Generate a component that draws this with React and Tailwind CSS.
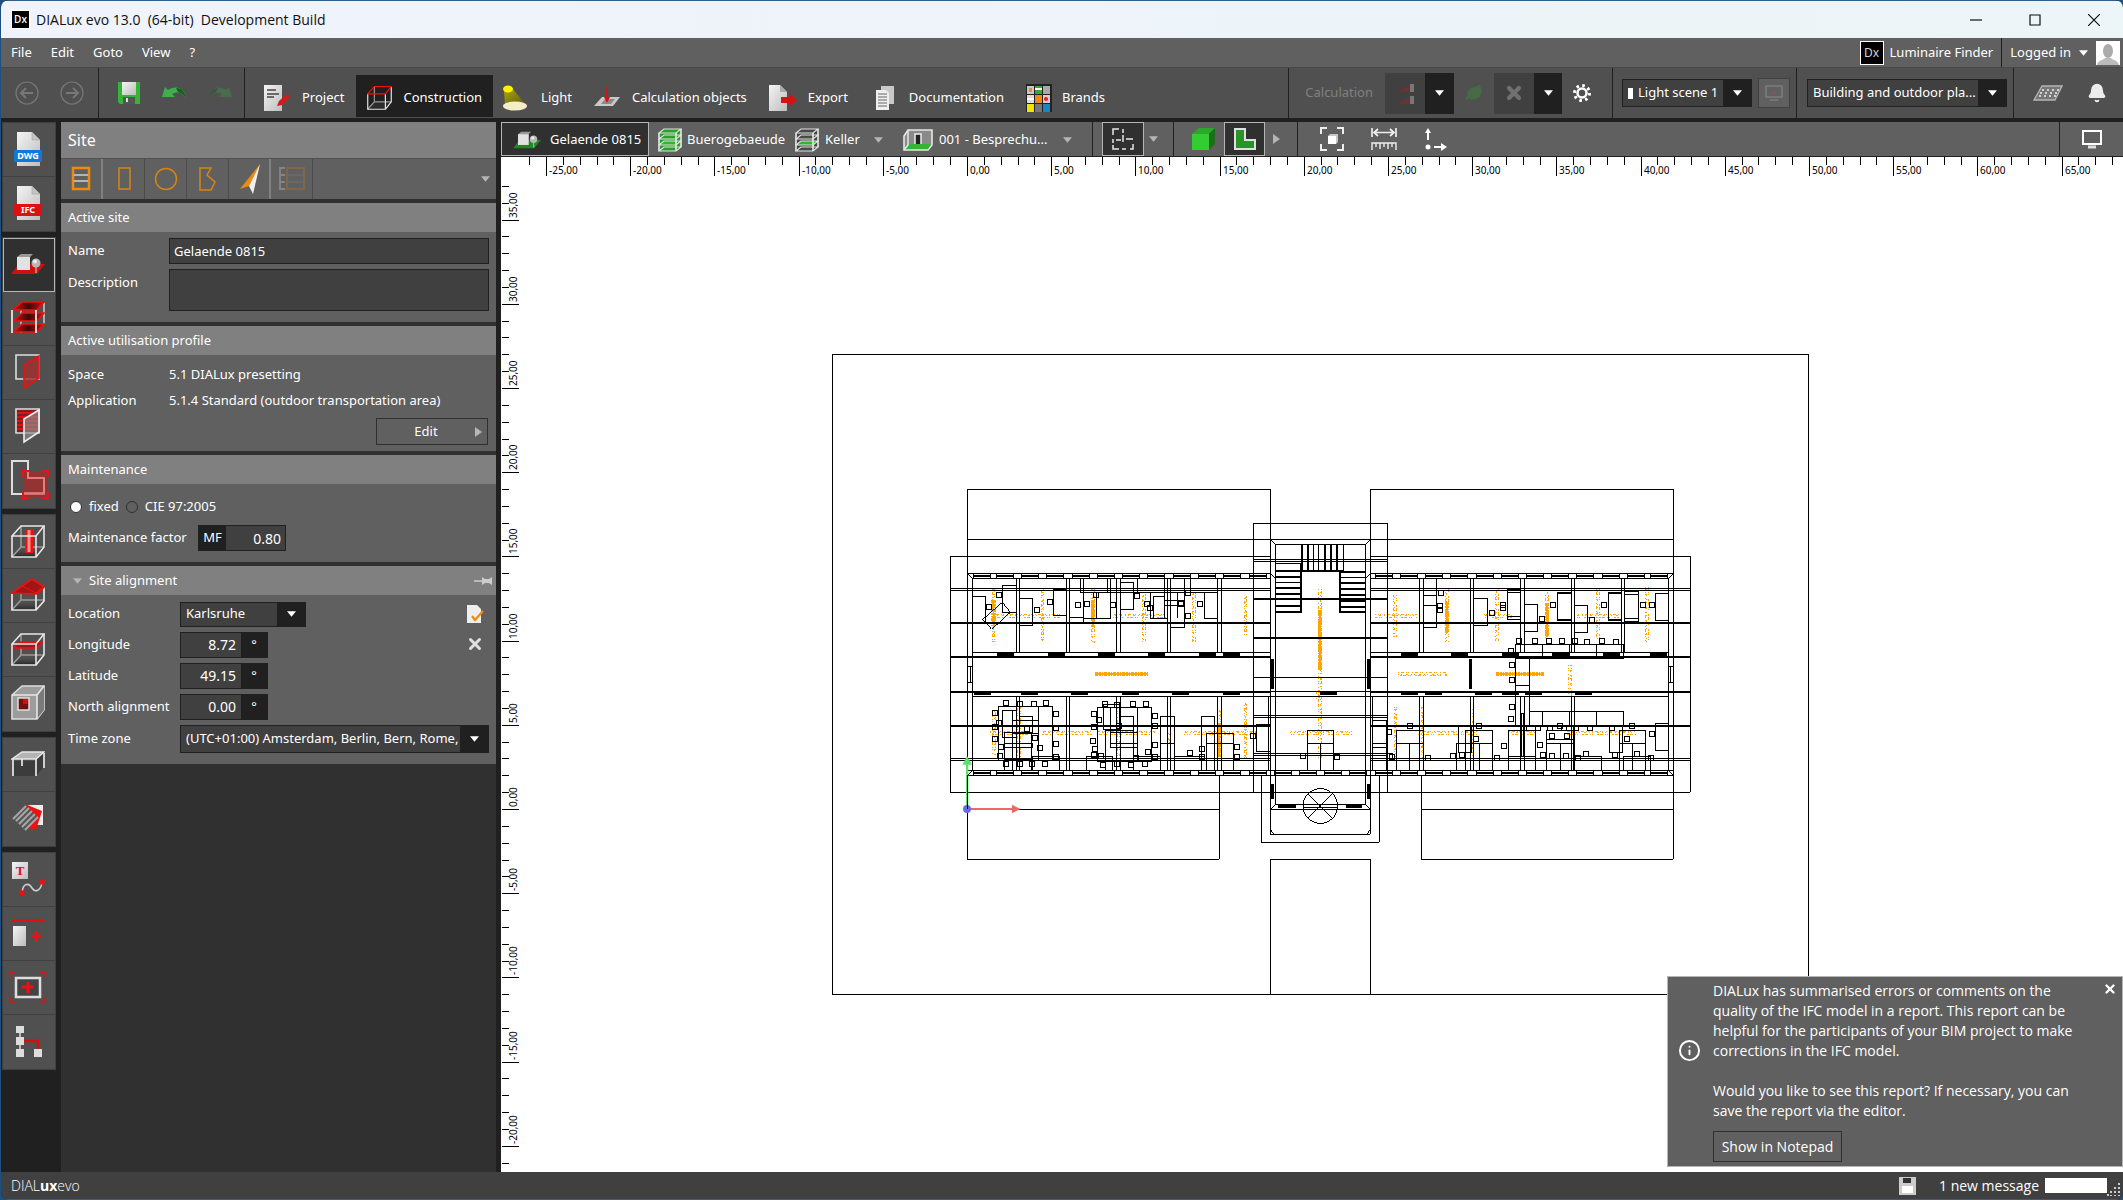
import React from 'react';
import { Leaf, Info, X, Bell } from 'lucide-react';
import clsx from 'clsx';

/* ---------- small building blocks ---------- */

const Caret = ({ className = 'text-white' }) => (
  <svg viewBox="0 0 10 6" className={clsx('w-[9px] h-[6px] shrink-0', className)} fill="currentColor">
    <path d="M0 0H10L5 6Z" />
  </svg>
);

const CaretRight = () => (
  <svg viewBox="0 0 7 10" className="w-[7px] h-[10px] shrink-0" fill="#b5b5b5">
    <path d="M0 0V10L7 5Z" />
  </svg>
);

const Divider = () => <div className="w-px self-stretch bg-[#202020] shrink-0" />;

const Dropdown = ({ id, label, options, className, arrow = 'w-7', children }) => (
  <div className={clsx('relative flex items-center bg-[#404040] border border-[#202020]', className)}>
    {children}
    <select
      id={id}
      aria-label={label}
      className="appearance-none outline-none bg-transparent text-white min-w-0 w-full h-full pl-[5px] pr-7"
    >
      {options.map((o) => (
        <option key={o}>{o}</option>
      ))}
    </select>
    <div className={clsx('absolute right-0 inset-y-0 bg-[#202020] flex items-center justify-center pointer-events-none', arrow)}>
      <Caret />
    </div>
  </div>
);

/* ---------- icons ---------- */

const Gradients = () => (
  <svg className="absolute w-0 h-0" aria-hidden="true">
    <defs>
      <linearGradient id="paper" x1="0" y1="0" x2="1" y2="1">
        <stop offset="0" stopColor="#f4f4f4" />
        <stop offset="1" stopColor="#bdbdbd" />
      </linearGradient>
      <linearGradient id="beam" x1="0" y1="0" x2="1" y2="1">
        <stop offset="0" stopColor="#b0a800" />
        <stop offset="1" stopColor="#5c5a20" />
      </linearGradient>
      <linearGradient id="redFade" x1="0" y1="0" x2="1" y2="0">
        <stop offset="0" stopColor="#e01010" />
        <stop offset="0.5" stopColor="#400808" />
        <stop offset="1" stopColor="#d01010" />
      </linearGradient>
      <linearGradient id="shade" x1="0" y1="0" x2="0" y2="1">
        <stop offset="0" stopColor="#555" stopOpacity="0" />
        <stop offset="1" stopColor="#222" />
      </linearGradient>
    </defs>
  </svg>
);

const Svg = ({ w, h, className, children }) => (
  <svg width={w} height={h} viewBox={`0 0 ${w} ${h}`} fill="none" className={clsx('shrink-0', className)}>
    {children}
  </svg>
);

const DxLogo = ({ outlined }) => (
  <span
    className={clsx(
      'bg-black flex items-center justify-center shrink-0 border border-white',
      outlined ? 'w-6 h-6 text-[12px] text-gray-300' : 'w-[19px] h-[19px] text-[10px] font-semibold text-white'
    )}
  >
    Dx
  </span>
);

const FileIcon = ({ name, color }) => (
  <Svg w={30} h={36}>
    <path d="M4 1H19L27 9V35H4Z" fill="url(#paper)" />
    <path d="M19 1V9H27Z" fill="#c4c4c4" stroke="#999" strokeWidth="0.5" />
    <rect x="1" y="19" width="28" height="12" fill={color} />
    <text x="15" y="28" textAnchor="middle" fontSize="9" fontWeight="700" fill="#fff">{name}</text>
  </Svg>
);

const SiteIcon = ({ ground, w = 36, h = 22 }) => (
  <svg width={w} height={h} viewBox="0 0 36 22" fill="none" className="shrink-0">
    <path d="M1 21L9 11H35L27 21Z" fill={ground} />
    <path d="M7 4L11 1H23L20 4V17L7 17Z" fill="#999" />
    <rect x="7" y="4" width="13" height="13" fill="#e2e2e2" />
    <path d="M26 12V20" stroke="#aaa" strokeWidth="1.5" />
    <circle cx="26" cy="10" r="4.5" fill="#b8b8b8" />
    <circle cx="25" cy="8.5" r="2" fill="#ececec" />
  </svg>
);

const Cube = ({ children, top = '#e6e6e6', className, w = 34, h = 34 }) => (
  <svg width={w} height={h} viewBox="0 0 34 34" fill="none" className={clsx('shrink-0', className)} strokeWidth="1.6">
    <path d="M1 33L10 23H33L25 33Z" fill="url(#shade)" />
    <path d="M10 2V23M1 33L10 23H33" stroke="#9a9a9a" />
    {children}
    <path d="M1 12V33H25V12M25 33L33 23V2" stroke="#e6e6e6" />
    <path d="M1 12L10 2H33L25 12Z" stroke={top} />
  </svg>
);

const Floors = ({ fill, stroke, w = 24, h = 24, body = 'none' }) => (
  <svg width={w} height={h} viewBox="0 0 24 24" fill="none" className="shrink-0">
    <path d="M1 5L6 1H23V18L18 23H1Z" fill={body} />
    {[1, 7, 13, 19].map((y) => (
      <path key={y} d={`M1 ${y + 4}L6 ${y}H23L18 ${y + 4}Z`} fill={y === 13 ? fill : 'none'} stroke={stroke} strokeWidth="1.2" />
    ))}
    <path d="M1 5V23M18 5V23M23 1V19" stroke="#e8e8e8" strokeWidth="1.6" />
  </svg>
);

const SaveIcon = () => (
  <Svg w={24} h={24}>
    <path d="M1 1H23V23H3L1 21Z" fill="#35b535" />
    <rect x="5" y="1" width="14" height="13" fill="url(#paper)" />
    <rect x="6" y="16" width="12" height="7" fill="#555" />
    <rect x="9" y="17" width="2" height="4" fill="#ddd" />
  </Svg>
);

const UndoIcon = ({ flip }) => (
  <Svg w={26} h={16} className={flip ? '-scale-x-100 opacity-30' : ''}>
    <path d="M1 12L4 2L7 5C14 0 24 2 25 13C20 6 15 7 11 9L14 12Z" fill="#3fae4c" />
    <path d="M15 3C21 3 24 7 25 13C22 9 20 8 17 7Z" fill="#16601f" />
  </Svg>
);

const ArrowCircle = ({ back }) => (
  <Svg w={24} h={24} className={back ? '' : '-scale-x-100'}>
    <circle cx="12" cy="12" r="11" stroke="#777" strokeWidth="1.2" />
    <path d="M18 12H7M11 7L6 12L11 17" stroke="#777" strokeWidth="2" />
  </Svg>
);

const ProjectIcon = () => (
  <Svg w={28} h={28}>
    <rect x="1" y="1" width="18" height="26" fill="url(#paper)" />
    <path d="M4 6H13M4 10H16M4 13H11" stroke="#444" strokeWidth="1.5" />
    <path d="M14 22L16 17L24 10L27 13L19 21Z" fill="#d81818" />
  </Svg>
);

const LightIcon = () => (
  <Svg w={26} h={26}>
    <path d="M2 5L10 3L24 20H3Z" fill="url(#beam)" />
    <ellipse cx="13" cy="21" rx="12" ry="4.5" fill="#f5ecc8" />
    <ellipse cx="6" cy="4" rx="5" ry="3.5" fill="#fff200" />
  </Svg>
);

const CalcObjectsIcon = () => (
  <Svg w={28} h={24}>
    <path d="M1 20L9 11H27L20 20Z" fill="#c9c9c9" />
    <path d="M8 18L12 13H22L18 18Z" fill="#8a8a8a" />
    <path d="M14 1V14" stroke="#e01010" strokeWidth="1.6" />
    <path d="M11 11H17L14 17Z" fill="#e01010" />
  </Svg>
);

const ExportIcon = () => (
  <Svg w={30} h={28}>
    <path d="M1 1H12L19 8V27H1Z" fill="url(#paper)" />
    <path d="M12 1V8H19Z" fill="#aaa" />
    <path d="M13 13H21V9L29 16L21 23V19H13Z" fill="#d81010" />
  </Svg>
);

const DocsIcon = () => (
  <Svg w={20} h={26}>
    <rect x="6" y="1" width="13" height="18" fill="#c9c9c9" />
    <path d="M1 5H11L14 8V25H1Z" fill="#efefef" />
    <path d="M3 9H12M3 12H12M3 15H12M3 18H12M3 21H12" stroke="#666" strokeWidth="1" />
  </Svg>
);

const BrandsIcon = () => {
  const cells = ['#c8c8c8', '#3a3', '#aaa', '#ddd', '#f08a10', '#e8c8c8', '#f0e400', '#777', '#1a86c0'];
  return (
    <Svg w={26} h={28}>
      <rect width="26" height="28" fill="#222" />
      {cells.map((c, i) => (
        <rect key={i} x={1 + (i % 3) * 8} y={2 + Math.floor(i / 3) * 9} width="7" height="8" fill={c} />
      ))}
      <path d="M9 5H16M1 15H8" stroke="#fff" strokeWidth="2" />
      <rect x="3" y="4" width="3" height="4" fill="#e09030" />
      <circle cx="20" cy="15" r="2" fill="#d22" />
    </Svg>
  );
};

const CalcBarsIcon = () => (
  <Svg w={18} h={24}>
    <path d="M0 11L13 5V11ZM0 23L13 17V23Z" fill="#6b3232" />
    <path d="M14 3H18V11H14ZM14 15H18V23H14Z" fill="#777" />
  </Svg>
);

const ScreenIcon = () => (
  <Svg w={18} h={16}>
    <path d="M1 1H17V12H1ZM5 15H13" stroke="#7c7c7c" strokeWidth="1.6" />
    <path d="M5 9L11 5V9Z" fill="#855" />
  </Svg>
);

const LedPanelIcon = () => (
  <Svg w={30} h={16}>
    <path d="M1 15L9 1H29L22 15Z" fill="#777" stroke="#b5b5b5" strokeWidth="1.3" />
    <path d="M9 5H26M7 8H25M6 11H23" stroke="#eee" strokeWidth="1.5" strokeDasharray="2 3" />
  </Svg>
);

const Gear = () => (
  <Svg w={20} h={20} className="ml-1.5">
    <circle cx="10" cy="10" r="4.5" stroke="#fff" strokeWidth="2.5" />
    <circle cx="10" cy="10" r="7.5" stroke="#fff" strokeWidth="3" strokeDasharray="2.6 3.29" />
  </Svg>
);

/* ---------- title and menu ---------- */

const TitleBar = () => (
  <header className="h-[38px] shrink-0 flex items-center pl-2.5 border-t border-[#2f5f8c] bg-gradient-to-r from-[#f0f3fb] to-[#ecf5f8] text-[#111] font-['Open_Sans','Noto_Sans',sans-serif] text-[14px]">
    <DxLogo />
    <h1 className="ml-1.5 whitespace-pre">DIALux evo 13.0  (64-bit)  Development Build</h1>
    <div className="ml-auto flex">
      {[['Minimise', 'M0 6H12'], ['Maximise', 'M1 1H11V11H1Z'], ['Close', 'M0 0L12 12M12 0L0 12']].map(([name, d]) => (
        <button key={name} aria-label={name} className="w-[59px] h-9 flex items-center justify-center">
          <Svg w={12} h={12}>
            <path d={d} stroke="#111" strokeWidth="1.2" />
          </Svg>
        </button>
      ))}
    </div>
  </header>
);

const MenuBar = () => (
  <nav className="h-[29px] shrink-0 flex items-center pl-2.5 bg-[#606060]">
    <div className="flex gap-[19px]">
      {['File', 'Edit', 'Goto', 'View', '?'].map((m) => (
        <button key={m}>{m}</button>
      ))}
    </div>
    <div className="ml-auto flex items-center self-stretch">
      <button className="flex items-center gap-1.5 pr-2">
        <DxLogo outlined />
        Luminaire Finder
      </button>
      <Divider />
      <button className="flex items-center pl-2 pr-[3px]">
        Logged in
        <span className="mx-[8px]"><Caret /></span>
        <Svg w={24} h={24} className="bg-white">
          <path d="M1 24C2 19 8 19 9 17H15C16 19 22 19 23 24Z" fill="#bbb" />
          <ellipse cx="12" cy="10" rx="5" ry="7" fill="#ababab" />
        </Svg>
      </button>
    </div>
  </nav>
);

/* ---------- main toolbar ---------- */

const modes = [
  { name: 'Project', icon: <ProjectIcon />, pad: 'pl-[18px] pr-3 gap-[11px]' },
  { name: 'Construction', icon: <Cube w={25} h={25} top="#f01010" />, pad: 'pl-[11px] pr-[11px] gap-[11px]', active: true },
  { name: 'Light', icon: <LightIcon />, pad: 'pl-[9px] pr-3 gap-[13px]' },
  { name: 'Calculation objects', icon: <CalcObjectsIcon />, pad: 'pl-[9px] pr-3 gap-[11px]' },
  { name: 'Export', icon: <ExportIcon />, pad: 'pl-[9px] pr-[11px] gap-[10px]' },
  { name: 'Documentation', icon: <DocsIcon />, pad: 'pl-[16px] pr-3 gap-[14px]' },
  { name: 'Brands', icon: <BrandsIcon />, pad: 'pl-[10px] pr-3 gap-[10px]' },
];

const Toolbar = () => (
  <div className="h-[51px] shrink-0 flex items-center bg-[#505050] border-t border-[#484848]">
    <div className="flex gap-[21px] px-[14px]">
      <button aria-label="Back"><ArrowCircle back /></button>
      <button aria-label="Forward"><ArrowCircle /></button>
    </div>
    <Divider />
    <div className="flex items-center gap-[20px] pl-[18px] pr-[11px]">
      <button aria-label="Save"><SaveIcon /></button>
      <button aria-label="Undo"><UndoIcon /></button>
      <button aria-label="Redo"><UndoIcon flip /></button>
    </div>
    <Divider />
    <div className="flex self-end h-[42px] mb-px">
      {modes.map((m) => (
        <button key={m.name} className={clsx('pt-[3px] flex items-center whitespace-nowrap', m.pad, m.active && 'bg-[#202020]')}>
          {m.icon}
          {m.name}
        </button>
      ))}
    </div>
    <div className="ml-auto flex items-center self-stretch">
      <Divider />
      <span className="pl-4 pr-3 text-[#808080]">Calculation</span>
      <div className="flex h-[41px]">
        <button aria-label="Start calculation" className="w-10 bg-[#404040] flex items-center justify-center"><CalcBarsIcon /></button>
        <button aria-label="Calculation options" className="w-[29px] bg-[#202020] flex items-center justify-center"><Caret /></button>
      </div>
      <button aria-label="Energy" className="w-10 flex items-center justify-center">
        <Leaf className="w-[18px] h-[18px] text-[#466b46]" fill="#466b46" />
      </button>
      <div className="flex h-[41px]">
        <button aria-label="Cancel" className="w-10 bg-[#404040] flex items-center justify-center">
          <X className="w-5 h-5 text-[#707070]" strokeWidth={5} />
        </button>
        <button aria-label="Cancel options" className="w-7 bg-[#202020] flex items-center justify-center"><Caret /></button>
      </div>
      <button aria-label="Settings" className="w-[50px] pl-1 flex items-center justify-start">
        <Gear />
      </button>
      <Divider />
      <Dropdown label="Light scene" options={['Light scene 1']} className="ml-[9px] w-[130px] h-7">
        <span className="ml-[5px] w-[5px] h-[11px] bg-white shrink-0" />
      </Dropdown>
      <button aria-label="Display values" className="mx-[6px] w-8 h-[30px] bg-[#606060] border border-[#404040] flex items-center justify-center">
        <ScreenIcon />
      </button>
      <Divider />
      <Dropdown label="View filter" options={['Building and outdoor pla...']} className="ml-[10px] mr-[6px] w-[200px] h-7" />
      <Divider />
      <div className="flex items-center gap-6 pl-[19px] pr-4">
        <button aria-label="Luminaires"><LedPanelIcon /></button>
        <button aria-label="Notifications"><Bell className="w-5 h-5 text-[#ececec]" fill="#ececec" /></button>
      </div>
    </div>
  </div>
);

/* ---------- left rail ---------- */

const DoorFrame = ({ panel, panelFill, backFill, back, hatch }) => (
  <Svg w={30} h={36}>
    <path d="M3 1H26V25H3Z" fill={backFill} stroke={back} strokeWidth="1.6" />
    {hatch && <path d="M4 5H25M4 9H25M4 13H25M4 17H25M4 21H25" stroke="#e01010" strokeWidth="2.2" />}
    <path d="M11 11L26 2V24L11 34Z" fill={panelFill} stroke={panel} strokeWidth="1.6" />
  </Svg>
);

const rail = [
  [
    { name: 'Import DWG', icon: <FileIcon name="DWG" color="#1177dd" /> },
    { name: 'Import IFC', icon: <FileIcon name="IFC" color="#dd1111" /> },
  ],
  [
    { name: 'Site', icon: <SiteIcon ground="#d01010" />, active: true },
    {
      name: 'Storey and building construction',
      icon: (
        <Svg w={34} h={34}>
          <path d="M10 2V32M33 2V23" stroke="#ccc" strokeWidth="1.5" />
          {[1, 12, 23].map((y) => (
            <path key={y} d={`M2 ${y + 8}L11 ${y}H33L26 ${y + 8}Z`} fill="url(#redFade)" stroke="#f01010" strokeWidth="1.5" />
          ))}
          <path d="M1 9V32M25 9V32" stroke="#eee" strokeWidth="1.7" />
        </Svg>
      ),
    },
    { name: 'Apertures', icon: <DoorFrame panel="#f01010" panelFill="#a03030cc" back="#ddd" backFill="none" /> },
    { name: 'Facade', icon: <DoorFrame panel="#eee" panelFill="#909090aa" back="#ddd" backFill="#7a2020" hatch /> },
    {
      name: 'Rooms',
      icon: (
        <Svg w={38} h={40} className="ml-1">
          <path d="M1 1H17V18H33V34H1Z" stroke="#ddd" strokeWidth="2" />
          <rect x="12" y="11" width="25" height="27" fill="#c0202099" />
          <path d="M17 12V18H33V33H12" stroke="#f08080" strokeWidth="1.6" />
          <path d="M12 17V11H18M31 11H37V17M37 32V38H31M18 38H12V32" stroke="#f01010" strokeWidth="2" />
        </Svg>
      ),
    },
  ],
  [
    {
      name: 'Columns',
      icon: (
        <Cube>
          <rect x="14" y="5" width="8" height="24" fill="#f01010" />
          <rect x="16.5" y="6" width="3" height="22" fill="#ff9090" />
        </Cube>
      ),
    },
    {
      name: 'Roofs',
      icon: (
        <Svg w={34} h={34}>
          <path d="M1 32L10 22H33L25 32Z" fill="url(#shade)" />
          <path d="M10 14V22M1 32L10 22H33" stroke="#9a9a9a" strokeWidth="1.5" />
          <path d="M1 16V32H25V16M25 32L33 23V9" stroke="#e6e6e6" strokeWidth="1.7" />
          <path d="M1 15L21 1L33 9L26 16Z" fill="#a01515" stroke="#f01010" strokeWidth="1.7" />
          <path d="M21 1L11 8L25 15L32 9" stroke="#f01010" strokeWidth="1.2" />
        </Svg>
      ),
    },
    {
      name: 'Ceilings',
      icon: (
        <Cube>
          <path d="M2 16L9 10H32L25 16Z" fill="#a01515" stroke="#f01010" />
        </Cube>
      ),
    },
    {
      name: 'Cutouts',
      icon: (
        <Svg w={34} h={36}>
          <path d="M1 10L11 1H33V25L26 34H1Z" fill="#9c9c9c" stroke="#ddd" strokeWidth="1.6" />
          <path d="M26 10L33 1V25L26 34Z" fill="#7a7a7a" />
          <path d="M1 10H26V34M26 10L33 1" stroke="#e6e6e6" strokeWidth="1.6" />
          <rect x="7" y="13" width="11" height="12" fill="#701010" stroke="#e6e6e6" strokeWidth="1.4" />
          <rect x="12" y="14" width="5" height="5" fill="#d01010" />
        </Svg>
      ),
    },
  ],
  [
    {
      name: 'Furniture',
      icon: (
        <Svg w={34} h={26}>
          <path d="M3 10H24L32 3V17L25 25H3Z" fill="#3c3c3c" />
          <path d="M2 8V25M25 8V25M33 2V17M11 8V15" stroke="#e6e6e6" strokeWidth="1.7" />
          <path d="M1 8L11 1H33L25 8Z" fill="#b4b4b4" stroke="#e6e6e6" strokeWidth="1.5" />
        </Svg>
      ),
    },
    {
      name: 'Materials',
      icon: (
        <Svg w={34} h={30}>
          <rect x="17" y="2" width="15" height="20" fill="#eee" />
          <path d="M14 1L31 8L25 27L12 24Z" fill="#f01010" />
          <path d="M1 15L14 2L27 15L14 28Z" fill="#585858" />
          <path d="M2 16L15 3M5 18L18 5M8 21L21 8M11 24L24 11M14 27L27 14" stroke="#a8a8a8" strokeWidth="1.8" />
        </Svg>
      ),
    },
  ],
  [
    {
      name: 'Text and lines',
      icon: (
        <Svg w={34} h={36}>
          <rect x="1" y="1" width="16" height="17" fill="url(#paper)" />
          <text x="9" y="14" textAnchor="middle" fontSize="13" fontWeight="700" fill="#e01010" className="font-['Liberation_Serif',serif]">T</text>
          <path d="M11 32C12 21 18 22 21 27S30 30 31 21" stroke="#ccc" strokeWidth="1.6" />
          <circle cx="11" cy="32" r="2.8" fill="#f01010" />
          <circle cx="31" cy="21" r="2.8" fill="#f01010" />
        </Svg>
      ),
    },
    {
      name: 'Ceiling grid',
      icon: (
        <Svg w={36} h={30}>
          <rect x="1" y="1" width="34" height="3" fill="#e01010" />
          <rect x="3" y="8" width="13" height="20" fill="url(#paper)" />
          <path d="M26 13V24M21 18H32" stroke="#f01010" strokeWidth="2.5" />
        </Svg>
      ),
    },
    {
      name: 'Add view',
      icon: (
        <Svg w={36} h={32}>
          <path d="M1 6V1H6M30 1H35V6M35 26V31H30M6 31H1V26" stroke="#e01010" strokeWidth="1.5" />
          <rect x="6" y="7" width="24" height="19" fill="#444" stroke="#ddd" strokeWidth="2.5" />
          <path d="M18 11V22M12 16H23" stroke="#f01010" strokeWidth="3" />
        </Svg>
      ),
    },
    {
      name: 'Connections',
      icon: (
        <Svg w={28} h={32}>
          <path d="M6 4V28" stroke="#bbb" strokeWidth="2" />
          <path d="M6 16H24V26" stroke="#d01010" strokeWidth="2.5" />
          <path d="M2 1H10V8H2ZM2 12H10V20H2ZM2 24H10V32H2ZM20 24H28V32H20Z" fill="#ddd" />
        </Svg>
      ),
    },
  ],
];

const Rail = () => (
  <aside className="w-[60px] shrink-0 bg-[#202020] flex flex-col gap-[5px] pl-px">
    {rail.map((group, i) => (
      <div key={i} className="w-[54px] flex flex-col border border-[#404040]">
        {group.map((t) => (
          <button
            key={t.name}
            aria-label={t.name}
            className={clsx(
              'h-[54px] pr-0.5 pb-0.5 flex items-center justify-center',
              t.active ? 'bg-[#303030] border border-[#b5b5b5]' : 'bg-[#505050] not-last:border-b border-[#404040]'
            )}
          >
            {t.icon}
          </button>
        ))}
      </div>
    ))}
  </aside>
);

/* ---------- site panel ---------- */

const SectionHeader = ({ children }) => (
  <h2 className="h-[29px] px-[7px] flex items-center bg-[#808080]">{children}</h2>
);

const panelTools = [
  {
    name: 'Site list',
    art: (
      <>
        <rect x="7" y="5" width="16" height="21" stroke="#ee8a0c" strokeWidth="2.5" />
        <path d="M8 12H22M8 18H22" stroke="#d0d0d0" strokeWidth="1.5" />
      </>
    ),
    edge: 'border-r-2 border-[#808080]',
  },
  { name: 'Draw rectangle', art: <rect x="10" y="5" width="11" height="21" stroke="#d68414" strokeWidth="1.5" /> },
  { name: 'Draw circle', art: <circle cx="15" cy="16" r="10.5" stroke="#d68414" strokeWidth="1.5" /> },
  { name: 'Draw polygon', art: <path d="M7 5H18L14 12L22 19L18 27H7Z" stroke="#d68414" strokeWidth="1.5" /> },
  {
    name: 'North direction',
    art: (
      <>
        <path d="M26 1L6 26L15 23Z" fill="#ee8a0c" />
        <path d="M26 1L15 23L19 31Z" fill="#f0f0f0" />
      </>
    ),
    edge: 'border-r-2 border-[#808080]',
  },
  {
    name: 'Copy site',
    art: (
      <>
        <path d="M8 5H3V26H8M3 12H8M3 19H8" stroke="#858585" strokeWidth="1.8" />
        <path d="M10 5H27V26H10Z" stroke="#80674a" strokeWidth="2" />
        <path d="M10 12H27M10 19H27" stroke="#757065" strokeWidth="1.2" />
      </>
    ),
  },
];

const DegreeField = ({ id, label, value }) => (
  <div className="flex items-center h-[31px]">
    <label htmlFor={id} className="w-[112px]">{label}</label>
    <div className="w-[88px] h-[26px] flex border border-[#202020] bg-[#404040]">
      <input id={id} defaultValue={value} className="w-[60px] pr-[5px] text-right text-[14px] bg-transparent outline-none" />
      <span className="flex-1 bg-[#202020] flex items-center justify-center">°</span>
    </div>
  </div>
);

const SitePanel = () => (
  <section className="w-[435px] shrink-0 bg-[#303030] flex flex-col gap-1">
    <div>
      <h2 className="h-9 px-[7px] flex items-center bg-[#808080] text-base">Site</h2>
      <div className="h-[41px] flex bg-[#606060] border-t border-[#505050]">
        {panelTools.map((t) => (
          <button key={t.name} aria-label={t.name} className={clsx('w-[42px] flex items-center justify-center', t.edge || 'border-r border-[#4c4c4c]')}>
            <Svg w={30} h={32}>{t.art}</Svg>
          </button>
        ))}
        <button aria-label="More tools" className="ml-auto mr-[6px]"><Caret className="text-[#b5b5b5]" /></button>
      </div>
    </div>

    <div className="bg-[#606060]">
      <SectionHeader>Active site</SectionHeader>
      <div className="px-[7px] pt-[6px] pb-[11px] flex flex-col gap-[5px]">
        <div className="flex items-center">
          <label htmlFor="site-name" className="w-[101px]">Name</label>
          <input id="site-name" defaultValue="Gelaende 0815" className="flex-1 min-w-0 h-[26px] px-1 bg-[#404040] border border-[#202020] outline-none" />
        </div>
        <div className="flex">
          <label htmlFor="site-desc" className="w-[101px] pt-1">Description</label>
          <textarea id="site-desc" className="flex-1 min-w-0 h-[42px] px-1 bg-[#404040] border border-[#202020] outline-none resize-none" />
        </div>
      </div>
    </div>

    <div className="bg-[#606060]">
      <SectionHeader>Active utilisation profile</SectionHeader>
      <dl className="px-[7px] pt-[7px] grid grid-cols-[101px_1fr] auto-rows-[26px] items-center">
        <dt>Space</dt>
        <dd>5.1 DIALux presetting</dd>
        <dt>Application</dt>
        <dd>5.1.4 Standard (outdoor transportation area)</dd>
      </dl>
      <div className="flex justify-end px-2 pt-1 pb-[6px]">
        <button className="w-28 h-[27px] flex items-center border border-[#303030] pr-[5px]">
          <span className="flex-1">Edit</span>
          <CaretRight />
        </button>
      </div>
    </div>

    <div className="bg-[#606060]">
      <SectionHeader>Maintenance</SectionHeader>
      <div className="px-[7px] pt-[13px] pb-[11px] flex flex-col gap-2">
        <div className="h-5 pl-0.5 flex items-center gap-[7px]">
          {[['fixed', true], ['CIE 97:2005', false]].map(([name, on]) => (
            <label key={name} className="flex items-center gap-[7px]">
              <input
                type="radio"
                name="maintenance"
                defaultChecked={on}
                className="appearance-none w-3 h-3 rounded-full border border-[#303030] checked:bg-white"
              />
              {name}
            </label>
          ))}
        </div>
        <div className="flex items-center">
          <label htmlFor="mf" className="w-[130px]">Maintenance factor</label>
          <div className="w-[88px] h-[26px] flex border border-[#202020] bg-[#404040]">
            <span className="w-[27px] bg-[#202020] flex items-center justify-center">MF</span>
            <input id="mf" defaultValue="0.80" className="flex-1 min-w-0 pr-1 text-right text-[14px] bg-transparent outline-none" />
          </div>
        </div>
      </div>
    </div>

    <div className="bg-[#606060]">
      <h2 className="h-[29px] pl-3 pr-1 flex items-center gap-[7px] bg-[#808080]">
        <Caret className="text-[#b5b5b5]" />
        Site alignment
        <Svg w={18} h={10} className="ml-auto">
          <path d="M0 5H8" stroke="#ccc" strokeWidth="1.5" />
          <path d="M8 1L11 3H15L18 1V9L15 7H11L8 9Z" fill="#ccc" />
        </Svg>
      </h2>
      <div className="px-[7px] pt-1 pb-2">
        <div className="flex items-center h-[30px]">
          <label htmlFor="location" className="w-[112px]">Location</label>
          <Dropdown id="location" options={['Karlsruhe']} className="w-[126px] h-[25px]" />
          <button aria-label="Apply location" className="ml-auto mr-[5px]">
            <Svg w={18} h={20}>
              <path d="M1 1H11L15 5V19H1Z" fill="#eee" />
              <path d="M6 12L9 16L17 7" stroke="#ee8a0c" strokeWidth="2.2" />
            </Svg>
          </button>
        </div>
        <div className="relative">
          <DegreeField id="longitude" label="Longitude" value="8.72" />
          <button aria-label="Clear location" className="absolute right-[5px] top-[6px]">
            <X className="w-[18px] h-[18px] text-[#e0e0e0]" strokeWidth={4} />
          </button>
        </div>
        <DegreeField id="latitude" label="Latitude" value="49.15" />
        <DegreeField id="north" label="North alignment" value="0.00" />
        <div className="flex items-center h-[34px]">
          <label htmlFor="timezone" className="w-[112px]">Time zone</label>
          <Dropdown
            id="timezone"
            options={['(UTC+01:00) Amsterdam, Berlin, Bern, Rome, Stockholm, Vienna']}
            className="w-[309px] h-7"
          />
        </div>
      </div>
    </div>
  </section>
);

/* ---------- view tabs ---------- */

const ViewBar = () => (
  <div className="h-[35px] shrink-0 flex items-stretch bg-[#606060] border-b border-[#202020]">
    <button className="w-[148px] pl-2 pt-0.5 flex items-center gap-1.5 bg-[#303030] border border-[#b5b5b5] whitespace-nowrap">
      <SiteIcon ground="#1c8a24" w={34} h={18} />
      Gelaende 0815
    </button>
    <button className="w-[137px] pl-[9px] pt-0.5 flex items-center gap-[5px]">
      <Floors fill="#2fb52f" stroke="#e0e0e0" body="#2aa02a" />
      Buerogebaeude
    </button>
    <button className="w-[108px] pl-[9px] pt-0.5 flex items-center gap-[6px]">
      <Floors fill="#2fb52f" stroke="#e0e0e0" body="#484848" />
      Keller
      <span className="ml-auto mr-[11px]"><Caret className="text-[#b5b5b5]" /></span>
    </button>
    <button className="w-[198px] pl-[9px] pt-0.5 flex items-center gap-[6px] whitespace-nowrap">
      <Svg w={30} h={22}>
        <path d="M5 1H29V16L25 21H1V7Z" fill="#8a8a8a" stroke="#e6e6e6" strokeWidth="1.6" />
        <path d="M2 20L7 15H28L25 20Z" fill="#35b535" />
        <path d="M5 1V16L1 21" stroke="#e6e6e6" strokeWidth="1.5" />
        <path d="M12 15V5H18V15" fill="#222" stroke="#eee" strokeWidth="1.5" />
      </Svg>
      001 - Besprechu...
      <span className="ml-auto mr-[20px]"><Caret className="text-[#b5b5b5]" /></span>
    </button>
    <Divider />
    <div className="flex items-center pl-[9px] pr-[15px] gap-[5px]">
      <button aria-label="Wireframe view" className="w-[42px] h-full bg-[#303030] border border-[#b5b5b5] flex items-center justify-center">
        <Svg w={24} h={24}>
          <path d="M2 8V2H8M2 12V16M2 18V22H8M11 22H15M19 22H22V17M15 12H22M12 8V15M12 2V6M5 13H10" stroke="#e6e6e6" strokeWidth="1.5" />
        </Svg>
      </button>
      <Caret className="text-[#b5b5b5]" />
    </div>
    <Divider />
    <div className="flex items-center pl-[17px] pr-[17px] gap-2">
      <button aria-label="3D view">
        <Svg w={25} h={24}>
          <path d="M1 7L8 1H24L18 7Z" fill="#2aa82a" />
          <path d="M18 7L24 1V17L18 23Z" fill="#1b6e1b" />
          <rect x="1" y="7" width="17" height="16" fill="#33cc33" />
        </Svg>
      </button>
      <button aria-label="Floor plan view" className="w-[41px] h-full bg-[#303030] border border-[#b5b5b5] flex items-center justify-center">
        <Svg w={24} h={24}>
          <path d="M2 2H12V13H22V22H2Z" fill="#279427" stroke="#e0e0e0" strokeWidth="2" />
        </Svg>
      </button>
      <CaretRight />
    </div>
    <Divider />
    <div className="flex items-center pl-[22px] gap-[27px]">
      <button aria-label="Zoom to fit">
        <Svg w={24} h={24}>
          <path d="M1 7V1H7M17 1H23V7M23 17V23H17M7 23H1V17" stroke="#eee" strokeWidth="2" />
          <rect x="8" y="9" width="8" height="8" fill="#fff" />
          <path d="M8 9L10 7H18V15L16 17V9Z" fill="#c8c8c8" />
        </Svg>
      </button>
      <button aria-label="Measure">
        <Svg w={26} h={24}>
          <path d="M1 1V10M25 1V10M3 5.5H23M7 2L3 5.5L7 9M19 2L23 5.5L19 9" stroke="#eee" strokeWidth="1.7" />
          <path d="M1 23V16H25V23M5 16V20M9 16V22M13 16V20M17 16V22M21 16V20" stroke="#eee" strokeWidth="1.4" />
        </Svg>
      </button>
      <button aria-label="Origin">
        <Svg w={24} h={24}>
          <path d="M4 4V13M10 20H18" stroke="#fff" strokeWidth="2" />
          <path d="M1 6L4 1L7 6ZM17 16L23 20L17 24Z" fill="#fff" />
          <circle cx="4" cy="20" r="2.5" fill="#fff" />
        </Svg>
      </button>
    </div>
    <div className="ml-auto flex">
      <Divider />
      <button aria-label="Full screen" className="w-[63px] flex items-center justify-center">
        <Svg w={22} h={20}>
          <path d="M2 2H20V15H2Z" stroke="#fff" strokeWidth="2" />
          <path d="M7 18H15" stroke="#ddd" strokeWidth="3" />
        </Svg>
      </button>
    </div>
  </div>
);

/* ---------- drawing area ---------- */

const ORIGIN = { x: 466, y: 652 };
const METRE = 16.84;

const range = (from, to) => Array.from({ length: to - from + 1 }, (_, i) => from + i);
const metres = (m) => `${m},00`;

const Rulers = () => (
  <g stroke="#000" shapeRendering="crispEdges">
    {range(-26, 68).map((m) => {
      const x = Math.round(ORIGIN.x + m * METRE);
      const major = m % 5 === 0;
      return (
        <g key={`x${m}`}>
          <path d={`M${x} 0V${major ? 19 : 8}`} />
          {major && <text x={x + 3} y="17" stroke="none" fontSize="10">{metres(m)}</text>}
        </g>
      );
    })}
    {range(-21, 37).map((m) => {
      const y = Math.round(ORIGIN.y - m * METRE);
      const major = m % 5 === 0;
      return (
        <g key={`y${m}`}>
          <path d={`M1 ${y}H${major ? 18 : 8}`} />
          {major && <text transform={`translate(16 ${y - 2}) rotate(-90)`} stroke="none" fontSize="10">{metres(m)}</text>}
        </g>
      );
    })}
  </g>
);

// Plan data is kept in drawing units, three units to a screen pixel.
const outlines = [
  'M112 1168V58H1021V1093H1321V58H2230V1168', 'M112 208H2230', 'M112 1018H868M112 1168H868V916',
  'M2230 1018H1474M2230 1168H1474V916', 'M1021 259H61V967H2281V259H1321', 'M970 160H1372V967M970 160V967',
  'M994 916V1117H1348V916', 'M1021 1572V1168H1321V1572',
  'M112 310H1021M127 325H1021M1321 310H2230M1321 325H2215', 'M127 325V901M2215 325V901', 'M112 901H2230M112 916H2230',
  'M127 547H1021M127 680H1021M1321 547H2215M1321 680H2215M1021 664H1321M1021 680H1321',
  'M1036 1003V223H1306V1003Z', 'M1021 1018H1321', 'M112 310L127 325M112 916L127 901M2230 310L2215 325M2230 916L2215 901',
  'M1021 208L1036 223M1321 208L1306 223M1021 1018L1036 1003M1321 1018L1306 1003M1021 310L1036 325M1321 310L1306 325',
  'M1021 1078L1031 1093M1321 1078L1311 1093', 'M1015 680V901M1327 680V901',
  'M61 355H1021M61 361H1021M1321 355H2281M1321 361H2281', 'M61 865H1021M61 871H1021M1321 865H2281M1321 871H2281',
  'M970 268H1372M970 274H1372M970 622H1372M970 738H1372M970 743H1372M970 850H1372M970 857H1372',
];

const heavy = [
  'M61 459H1021M61 561H1021M61 666H1021M61 768H1021', 'M1321 459H2281M1321 561H2281M1321 666H2281M1321 768H2281',
  'M970 387H1372M970 504H1372', 'M1037 303H1240M1037 321H1113M1037 354H1113M1037 372H1113M1037 408H1113M1037 426H1113',
  'M1230 306H1306M1230 339H1306M1230 357H1306M1230 375H1306M1230 393H1306M1230 411H1306M1230 426H1306',
  'M1113 282V428M1230 303V428M1115 223V303M1134 223V303M1185 223V303M1203 223V303M1221 223V303',
  'M1756 564H2080',
];

const partitions = {
  left: [260, 268, 410, 418, 560, 571, 713, 721, 863, 874],
  right: [1468, 1480, 1622, 1630, 1771, 1783, 1924, 1933],
};

const windowXs = [
  130, 199, 275, 351, 427, 503, 578, 654, 730, 806, 880, 958,
  1336, 1412, 1487, 1563, 1639, 1715, 1790, 1864, 1940, 2017, 2093, 2161,
];
const hallWindowXs = [1034, 1108, 1183, 1259];
const upperDoors = [202, 355, 505, 655, 808, 878, 1414, 1564, 1717, 1867, 2020, 2161];
const lowerDoors = [133, 274, 424, 577, 727, 878, 1171, 1414, 1484, 1636, 1717, 1786, 1936];
const wallDoors = [[1021, 568, 10, 90], [1311, 568, 10, 90], [1021, 943, 10, 45], [1311, 943, 10, 45], [1617, 568, 8, 90], [1045, 1005, 52, 10], [1249, 1005, 46, 10]];

const desks = [
  [127, 379, 39, 79], [217, 346, 43, 81], [268, 385, 39, 81], [371, 358, 39, 78], [460, 367, 39, 78], [499, 367, 43, 78],
  [571, 337, 39, 81], [661, 367, 42, 78], [670, 379, 33, 66], [703, 325, 9, 120], [722, 367, 41, 105], [823, 367, 40, 78],
  [451, 325, 9, 42], [532, 325, 9, 42], [571, 325, 51, 42], [763, 325, 18, 42], [703, 391, 60, 16], [418, 442, 42, 16], [742, 367, 0, 78],
  [205, 709, 163, 162], [218, 721, 42, 81], [247, 721, 0, 66], [268, 739, 39, 48], [325, 709, 0, 162], [223, 787, 82, 81],
  [223, 787, 24, 114], [223, 820, 84, 12], [247, 751, 78, 40], [307, 859, 81, 42], [305, 787, 0, 114],
  [502, 712, 163, 162], [520, 703, 50, 75], [541, 712, 81, 75], [571, 739, 39, 42], [526, 781, 84, 120], [541, 781, 69, 51],
  [622, 712, 0, 162], [541, 820, 81, 12], [469, 859, 80, 42], [610, 859, 81, 42], [691, 739, 42, 81], [691, 820, 42, 81],
  [733, 859, 90, 0], [814, 739, 39, 162], [829, 790, 82, 111], [829, 820, 82, 0], [979, 763, 42, 81],
  [1132, 781, 78, 120], [1132, 820, 78, 0], [1171, 820, 0, 81],
  [1480, 325, 39, 147], [1480, 376, 39, 30], [1630, 385, 42, 81], [1732, 358, 39, 90], [1732, 367, 39, 72], [1783, 403, 39, 81],
  [1882, 367, 42, 84], [1882, 370, 42, 78], [1933, 406, 40, 81], [2035, 367, 39, 84], [2035, 370, 39, 78], [2083, 364, 43, 90],
  [2083, 373, 43, 72], [2176, 370, 39, 81], [1756, 523, 324, 42], [1837, 523, 0, 42], [1918, 523, 0, 42], [1999, 523, 0, 42],
  [1756, 565, 42, 203], [1756, 646, 42, 0], [1798, 724, 282, 44], [1837, 724, 0, 44], [1918, 724, 0, 44], [1999, 724, 0, 44],
  [1327, 751, 42, 150], [1327, 820, 42, 12], [1399, 781, 81, 120], [1399, 820, 81, 0], [1438, 820, 0, 81],
  [1585, 768, 39, 80], [1606, 781, 82, 120], [1579, 820, 109, 81], [1648, 820, 0, 81], [1735, 781, 81, 120], [1735, 859, 81, 0],
  [1774, 730, 6, 130], [1849, 781, 82, 120], [1849, 808, 82, 12], [1891, 820, 0, 81], [1933, 859, 81, 42], [2038, 768, 40, 79],
  [2068, 781, 79, 120], [2068, 820, 79, 0], [2107, 820, 0, 81], [2080, 859, 81, 42], [2176, 760, 39, 81],
];

const chairs = [
  [200, 367], [170, 403], [313, 412], [352, 388], [436, 397], [464, 395], [490, 367], [541, 397], [613, 370], [654, 406],
  [645, 394], [745, 394], [802, 394], [766, 361], [766, 430], [220, 691], [262, 695], [304, 694], [340, 691], [370, 724],
  [370, 766], [370, 814], [370, 853], [187, 721], [187, 763], [187, 799], [202, 850], [220, 874], [262, 874], [300, 874],
  [337, 874], [322, 826], [308, 797], [284, 770], [200, 751], [206, 823], [517, 694], [553, 697], [601, 694], [640, 694],
  [667, 730], [667, 760], [667, 817], [667, 853], [484, 724], [484, 763], [481, 806], [487, 829], [486, 847], [513, 877],
  [553, 874], [595, 877], [637, 874], [646, 838], [612, 856], [499, 742], [505, 850], [560, 762], [772, 841], [808, 829],
  [808, 853], [913, 823], [913, 853], [962, 790], [1111, 850], [1213, 853], [1525, 361], [1522, 400], [1522, 412], [1678, 421],
  [1711, 398], [1711, 406], [1828, 439], [1863, 397], [1980, 442], [2015, 399], [2131, 398], [2158, 397], [1760, 505], [1807, 505],
  [1849, 505], [1888, 505], [1927, 505], [1963, 508], [2008, 505], [2050, 508], [1735, 535], [1738, 577], [1738, 622], [1738, 703],
  [1735, 739], [1369, 778], [1372, 850], [1378, 853], [1432, 760], [1486, 856], [1561, 850], [1588, 847], [1639, 760], [1630, 799],
  [1714, 820], [1693, 856], [1822, 817], [1831, 847], [1858, 790], [1903, 790], [1858, 850], [1900, 850], [1882, 760], [1936, 856],
  [1960, 844], [2047, 847], [2099, 760], [2083, 799], [2113, 844], [2155, 856], [2158, 784], [1774, 768], [1816, 768], [1852, 768],
  [1894, 768], [1930, 768], [1972, 768], [2038, 768],
];

const roomLabels = [
  'M191 357V517', 'M338 357V517', 'M489 357V519', 'M642 357V517', 'M792 357V517', 'M947 376V498', 'M193 724V855', 'M268 712V860',
  'M568 712V860', 'M716 790V820', 'M868 712V860', 'M947 698V868', 'M1171 357V865', 'M1165 660V692', 'M1395 376V500', 'M1551 357V517',
  'M1701 357V513', 'M1852 367V507', 'M2004 357V507', 'M2151 350V520', 'M1921 585V680', 'M1397 709V868', 'M1474 709V865', 'M1627 718V860',
  'M190 438H395', 'M549 438H720', 'M1335 438H1460', 'M1660 438H1745', 'M1942 438H2068', 'M1398 613H1550',
  'M180 789H300', 'M336 789H485', 'M505 789H675', 'M762 789H980', 'M1080 789H1265', 'M1462 789H1640', 'M1738 789H1818', 'M1910 789H2118',
];
const denseLabels = 'M495 613H655M1698 613H1842M1171 420V600M1551 395V490M1852 400V500M868 760V860M191 390V470M489 390V470';

// Three ragged strokes side by side give the look of lettering too small to read.
const labelStrokes = [
  { shift: -4, dash: '3 6 9 6 3 3 3 9' },
  { shift: 0, dash: '6 9 3 6 3 12' },
  { shift: 4, dash: '9 6 3 3 3 12 6 3' },
];

const RoomLabel = ({ d, seed }) => {
  const vertical = d.includes('V');
  return labelStrokes.map(({ shift, dash }) => (
    <path
      key={shift}
      d={d}
      transform={vertical ? `translate(${shift} 0)` : `translate(0 ${shift})`}
      strokeWidth="3"
      strokeDasharray={dash}
      strokeDashoffset={seed * 7}
    />
  ));
};

const FloorPlan = () => (
  <g transform="translate(429 313) scale(0.33333)" fill="none" stroke="#000" strokeWidth="3" shapeRendering="crispEdges">
    <rect x="-293" y="-347" width="2928" height="1920" />
    <g stroke="#ffa500">
      {roomLabels.map((d, i) => <RoomLabel key={d} d={d} seed={i} />)}
      <path d={denseLabels} strokeWidth="13" strokeDasharray="9 3 6 3 3 3" />
      <path d={denseLabels} strokeWidth="5" />
    </g>
    <path d={outlines.join('')} />
    <path d={heavy.join('')} strokeWidth="6" />
    <path d="M1037 280H1113M1037 338H1113M1037 390H1113M1230 322H1306M1150 223V303M1167 223V303M1240 223V303" />
    {[...partitions.left, ...partitions.right].map((x) => (
      <path key={x} d={`M${x} 325V547M${x} 680V901`} />
    ))}
    <path d="M2074 325V547M2083 325V547M451 367H862" />
    {windowXs.map((x) => (
      <g key={x}>
        <path d={`M${x} 310V325M${x + 51} 310V325M${x} 901V916M${x + 51} 901V916`} />
        <path d={`M${x} 318H${x + 51}M${x} 909H${x + 51}`} strokeWidth="5" />
      </g>
    ))}
    {hallWindowXs.map((x) => (
      <g key={x}>
        <path d={`M${x} 901V916M${x + 51} 901V916`} />
        <path d={`M${x} 909H${x + 51}`} strokeWidth="5" />
      </g>
    ))}
    <g fill="#000" stroke="none">
      {upperDoors.map((x) => <rect key={x} x={x} y="550" width="51" height="9" />)}
      {lowerDoors.map((x) => <rect key={x} x={x} y="667" width="51" height="9" />)}
      {wallDoors.map(([x, y, w, h]) => <rect key={`${x}-${y}`} x={x} y={y} width={w} height={h} />)}
    </g>
    <path d="M112 589H127V637H112M121 589V637M2230 589H2215V637H2230M2221 589V637" />
    {desks.map(([x, y, w, h], i) =>
      w && h ? <rect key={i} x={x} y={y} width={w} height={h} /> : <path key={i} d={`M${x} ${y}l${w} ${h}`} />
    )}
    {chairs.map(([x, y], i) => <rect key={i} x={x} y={y} width="15" height="15" />)}
    <path d="M217 397L241 427L185 478L158 448Z" />
    <circle cx="1171" cy="1008" r="52" />
    <path d="M1135 972L1207 1044M1207 972L1135 1044M1120 1005H1222M1120 1012H1222" />
    <g shapeRendering="auto" stroke="none">
      <path d="M108 1018V884H97L111 858L126 884H115V1018Z" fill="#5fe070" />
      <path d="M112 1014H246V1004L272 1017L246 1030V1020H112Z" fill="#e86a6a" />
      <circle cx="111" cy="1017" r="12" fill="#6a6ae4" />
    </g>
    <path d="M112 1018V916" />
  </g>
);

const Toast = () => (
  <div
    role="alert"
    className="absolute right-0 bottom-[5px] w-[456px] h-[191px] flex items-start bg-[#606060] border border-[#b5b5b5] text-[14px] leading-5 font-['Open_Sans','Noto_Sans',sans-serif]"
  >
    <div className="w-[45px] pl-2.5 pt-[62px]">
      <Info className="w-[23px] h-[23px]" strokeWidth={2} />
    </div>
    <div className="pt-1 flex-1">
      <p>
        DIALux has summarised errors or comments on the<br />
        quality of the IFC model in a report. This report can be<br />
        helpful for the participants of your BIM project to make<br />
        corrections in the IFC model.
      </p>
      <p className="mt-5">
        Would you like to see this report? If necessary, you can<br />
        save the report via the editor.
      </p>
      <button className="mt-2.5 h-[31px] w-[129px] border border-[#303030]">Show in Notepad</button>
    </div>
    <button aria-label="Close message" className="absolute right-[5px] top-[5px]">
      <X className="w-[14px] h-[14px]" strokeWidth={4} />
    </button>
  </div>
);

const Canvas = () => (
  <main className="relative flex-1 bg-white overflow-hidden">
    <svg className="absolute inset-0 w-full h-full" role="img" aria-label="Site plan">
      <FloorPlan />
      <Rulers />
    </svg>
    <Toast />
  </main>
);

const StatusBar = () => (
  <footer className="h-7 shrink-0 flex items-center pl-2.5 pr-[2px] bg-[#404040] border-b border-[#2f5f8c]">
    <span className="font-['Open_Sans',sans-serif] font-light text-[14px]">
      DIAL<b className="font-bold">ux</b>evo
    </span>
    <div className="ml-auto flex items-center font-['Open_Sans','Noto_Sans',sans-serif] text-[14px]">
      <Svg w={17} h={18} className="mr-[23px]">
        <path d="M0 0H17V18H0Z" fill="#ccc" />
        <path d="M4 1H12V6H4Z" fill="#333" />
        <path d="M3 9H14V16H3Z" fill="#fff" />
      </Svg>
      1 new message
      <span className="ml-[6px] w-[62px] h-[15px] bg-white" />
      <Svg w={14} h={14} className="self-end">
        <path d="M12 1V14M8 5V14M4 9V14M1 12V14" stroke="#ccc" strokeWidth="2" strokeDasharray="2 2" />
      </Svg>
    </div>
  </footer>
);

const App = () => (
  <div className="min-h-screen bg-[#1d4f80] flex">
    <Gradients />
    <div className="flex-1 min-w-0 ml-px flex flex-col rounded-lg overflow-hidden bg-[#202020] text-white text-[13px] font-['Noto_Sans','DejaVu_Sans',sans-serif]">
      <TitleBar />
      <MenuBar />
      <Toolbar />
      <div className="flex-1 flex pt-1 min-h-0">
        <Rail />
        <SitePanel />
        <div className="flex-1 min-w-0 ml-[5px] flex flex-col">
          <ViewBar />
          <Canvas />
        </div>
      </div>
      <StatusBar />
    </div>
  </div>
);

export default App;
